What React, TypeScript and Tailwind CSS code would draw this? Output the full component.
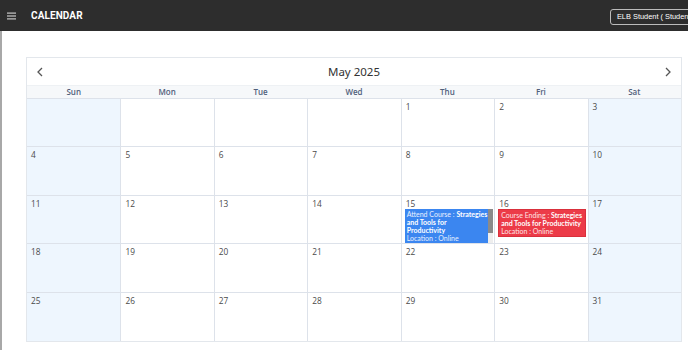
import React from "react";

const days = ["Sun", "Mon", "Tue", "Wed", "Thu", "Fri", "Sat"];
const cells: (number | null)[] = [
  null, null, null, null, 1, 2, 3,
  4, 5, 6, 7, 8, 9, 10,
  11, 12, 13, 14, 15, 16, 17,
  18, 19, 20, 21, 22, 23, 24,
  25, 26, 27, 28, 29, 30, 31,
];

const evFont = { fontFamily: 'Lato, "Noto Sans", sans-serif' };

export default function App() {
  return (
    <div className="w-[688px] h-[350px] overflow-hidden bg-white" style={{ fontFamily: '"Open Sans", "Noto Sans", sans-serif' }}>
      <div className="h-[31px] bg-[#2d2d2d] flex items-center pl-[7px]">
        <svg width="9" height="8" viewBox="0 0 9 8" className="mr-[15px]">
          <rect x="0" y="0.5" width="9" height="1.2" fill="#c8c8c8" />
          <rect x="0" y="3.4" width="9" height="1.2" fill="#c8c8c8" />
          <rect x="0" y="6.3" width="9" height="1.2" fill="#c8c8c8" />
        </svg>
        <span className="text-white font-bold text-[10px] tracking-[0.1px]" style={{ fontFamily: 'Roboto, "Liberation Sans", sans-serif' }}>CALENDAR</span>
        <div className="ml-auto mr-[-14px] mt-[2px] h-[16px] pl-[6px] pr-[6px] border border-[#bbbbbb] rounded-[3px] flex items-center text-white text-[7.4px] whitespace-nowrap" style={{ fontFamily: '"Liberation Sans", Arial, sans-serif' }}>
          ELB Student ( Student )
        </div>
      </div>
      <div className="h-[319px] border-l-2 border-[#a8a8a8] pl-[24px] pt-[26px]">
        <div className="w-[656px] border border-[#e3e7ec] bg-white">
          <div className="h-[27px] flex items-center justify-between px-[9px] text-[#333]">
            <svg width="8" height="10" viewBox="0 0 8 10"><path d="M6 1 L2 5 L6 9" fill="none" stroke="#555" strokeWidth="1.3" /></svg>
            <span className="text-[11.5px] text-[#333]" style={{ fontFamily: '"Noto Sans", sans-serif' }}>May 2025</span>
            <svg width="8" height="10" viewBox="0 0 8 10"><path d="M2 1 L6 5 L2 9" fill="none" stroke="#555" strokeWidth="1.3" /></svg>
          </div>
          <div className="grid grid-cols-7 h-[13px] bg-[#f6f8fa] border-t border-[#eef1f4]">
            {days.map((d) => (
              <div key={d} className="flex items-center justify-center text-[8px] font-semibold text-[#51607a]">{d}</div>
            ))}
          </div>
          <div className="grid grid-cols-7 grid-rows-[48px_49px_48px_49px_49px]">
            {cells.map((c, i) => {
              const col = i % 7;
              const weekend = col === 0 || col === 6;
              return (
                <div
                  key={i}
                  className={`relative border-t border-[#dde2ea] ${col > 0 ? "border-l" : ""} ${weekend ? "bg-[#eef6fe]" : "bg-white"} overflow-hidden`}
                >
                  {c !== null && (
                    <div className="pl-[4px] pt-[3px] text-[8.3px] leading-[10px] text-[#4a4a4a]">{c}</div>
                  )}
                  {c === 15 && (
                    <div className="ml-[3px] mr-[1px] mt-[0px] h-[35px] flex overflow-hidden">
                      <div className="flex-1 bg-[#3b86f0] px-[2px] pt-[1px] text-[7px] leading-[8px] text-white whitespace-nowrap overflow-hidden" style={evFont}>
                        <span className="text-[#e8f0ff]">Attend Course : </span>
                        <span className="font-bold">Strategies</span>
                        <br />
                        <span className="font-bold">and Tools for</span>
                        <br />
                        <span className="font-bold">Productivity</span>
                        <div className="text-[#e8f0ff]">Location : Online</div>
                      </div>
                      <div className="w-[5px] bg-[#eeeeee] flex flex-col">
                        <div className="h-[24px] bg-[#8a8a8a]" />
                      </div>
                    </div>
                  )}
                  {c === 16 && (
                    <div className="ml-[3px] mr-[2px] mt-[0px] bg-[#ec3b48] border border-[#d9303c] px-[2px] pt-[1px] pb-[1px] text-[7px] leading-[8px] text-white whitespace-nowrap overflow-hidden" style={evFont}>
                      <span className="text-[#ffe4e6]">Course Ending : </span>
                      <span className="font-bold">Strategies</span>
                      <br />
                      <span className="font-bold">and Tools for Productivity</span>
                      <div className="text-[#ffe4e6]">Location : Online</div>
                    </div>
                  )}
                </div>
              );
            })}
          </div>
        </div>
      </div>
    </div>
  );
}
